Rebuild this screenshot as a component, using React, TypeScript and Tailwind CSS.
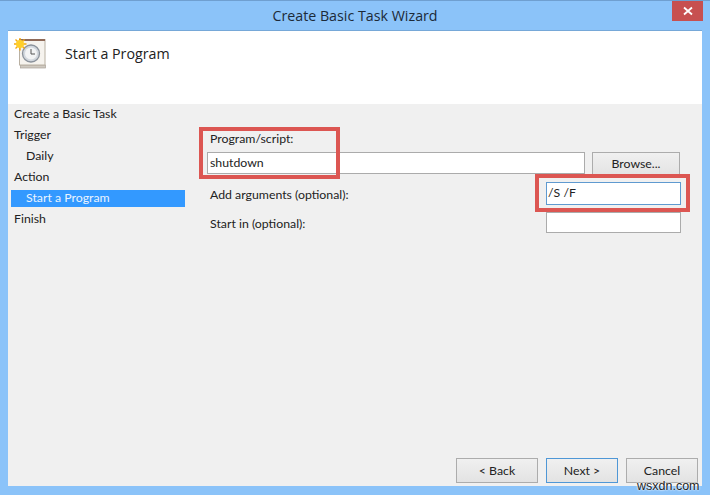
const navItems = [
  { label: "Create a Basic Task", indent: false, selected: false },
  { label: "Trigger", indent: false, selected: false },
  { label: "Daily", indent: true, selected: false },
  { label: "Action", indent: false, selected: false },
  { label: "Start a Program", indent: true, selected: true },
  { label: "Finish", indent: false, selected: false },
]

function TaskIcon() {
  return (
    <svg width="34" height="34" viewBox="0 0 34 34" className="block">
      <rect x="6.5" y="27" width="25" height="3" fill="#cfcac1" stroke="#a8a298" strokeWidth="0.7" />
      <rect x="5.5" y="1.5" width="25.5" height="25.5" fill="#f6f3ee" stroke="#b9b0a2" />
      <rect x="5" y="1" width="26" height="2" fill="#8f6a58" />
      <circle cx="17" cy="15.5" r="8.5" fill="#d3d8de" stroke="#8b929b" strokeWidth="1.3" />
      <circle cx="17" cy="15.5" r="6" fill="#f3f4f5" />
      <path d="M17 11v5h4" fill="none" stroke="#555" strokeWidth="1" />
      <g stroke="#f5a90a" strokeWidth="1.4">
        <path d="M6 -0.5v13M-0.5 6h13M1.5 1.5l9 9M10.5 1.5l-9 9" />
      </g>
      <circle cx="6" cy="6" r="4" fill="#ffcf2a" />
    </svg>
  )
}

function Button({ label, primary, className }: { label: string; primary?: boolean; className: string }) {
  return (
    <button
      className={`h-[25px] ${className} border bg-gradient-to-b from-[#f0f0f0] to-[#e3e3e3] text-[#222] ${
        primary ? "border-[#4f97d6]" : "border-[#acacac]"
      }`}
    >
      {label}
    </button>
  )
}

export default function App() {
  return (
    <div
      className="relative flex h-[495px] w-[710px] flex-col overflow-hidden border-t border-[#6f9fd0] bg-[#8bc3f9] text-[12.3px] text-[#222]"
      style={{ fontFamily: 'Lato, "Open Sans", sans-serif' }}
    >
      <div
        className="relative flex h-[29px] shrink-0 items-center justify-center text-[14.25px] text-[#1c2a38]"
        style={{ fontFamily: '"Open Sans", sans-serif' }}
      >
        Create Basic Task Wizard
        <div className="absolute right-[7px] top-0 flex h-[20px] w-[31px] items-center justify-center bg-[#c75050]">
          <svg width="10" height="10" viewBox="0 0 10 10">
            <path d="M1 1.5l8 7M9 1.5l-8 7" stroke="#fff" strokeWidth="1.8" />
          </svg>
        </div>
      </div>

      <div className="mx-[8px] mb-[9px] flex flex-1 flex-col border-t border-[#76a8d8] bg-[#f0f0f0]">
        <div className="flex h-[73px] shrink-0 items-start bg-white">
          <div className="ml-[6px] mt-[7px]">
            <TaskIcon />
          </div>
          <div
            className="ml-[17px] mt-[11px] text-[14.25px] leading-[24px] text-[#222]"
            style={{ fontFamily: '"Open Sans", sans-serif' }}
          >
            Start a Program
          </div>
        </div>

        <div className="flex flex-1">
          <div className="flex w-[177px] shrink-0 flex-col pl-[3px]">
            {navItems.map((item) => (
              <div key={item.label} className="flex h-[21px] items-center">
                <div
                  className={`flex h-[17px] w-full items-center ${item.indent ? "pl-[15px]" : "pl-[3px]"} ${
                    item.selected ? "bg-[#3399ff] text-[#eaf4ff]" : ""
                  }`}
                >
                  {item.label}
                </div>
              </div>
            ))}
          </div>

          <div className="flex flex-1 flex-col pl-[22px] pt-[26px]">
            <div className="pl-[3px] leading-[17px]">Program/script:</div>
            <div className="mt-[5px] flex h-[22px] items-start">
              <div className="flex h-[22px] w-[378px] items-center border border-[#ababab] bg-white pl-[2px]">
                shutdown
              </div>
              <div className="ml-[7px]">
                <Button label="Browse..." className="w-[88px]" />
              </div>
            </div>
            <div className="mt-[8px] flex h-[23px] items-center">
              <div className="w-[339px] pl-[3px] pt-[3px]">Add arguments (optional):</div>
              <div className="flex h-[23px] w-[135px] items-center border border-[#5f9ad0] bg-white pl-[1px]">
                /S /F
              </div>
            </div>
            <div className="mt-[7px] flex h-[21px] items-center">
              <div className="w-[339px] pl-[3px] pt-[3px]">Start in (optional):</div>
              <div className="h-[21px] w-[135px] border border-[#ababab] bg-white" />
            </div>

            <div className="mt-auto mb-[3px] flex justify-end gap-[8px] pr-[4px]">
              <Button label="< Back" className="w-[82px] pt-[1px]" />
              <Button label="Next >" className="w-[72px] pt-[1px]" primary />
              <Button label="Cancel" className="w-[72px] pt-[1px]" />
            </div>
          </div>
        </div>
      </div>

      {/* red annotation boxes drawn over the screenshot */}
      <div className="absolute left-[199px] top-[126px] h-[52px] w-[141px] border-[4px] border-[#dc5652]" />
      <div className="absolute left-[535px] top-[173px] h-[38px] w-[155px] border-[4px] border-[#dc5652]" />

      <div
        className="absolute left-[637px] top-[478px] text-[12.5px] leading-[14px] text-[#222]"
        style={{ fontFamily: '"Liberation Sans", sans-serif', textShadow: "0 0 2px #fff, 0 0 2px #fff" }}
      >
        wsxdn.com
      </div>
    </div>
  )
}
